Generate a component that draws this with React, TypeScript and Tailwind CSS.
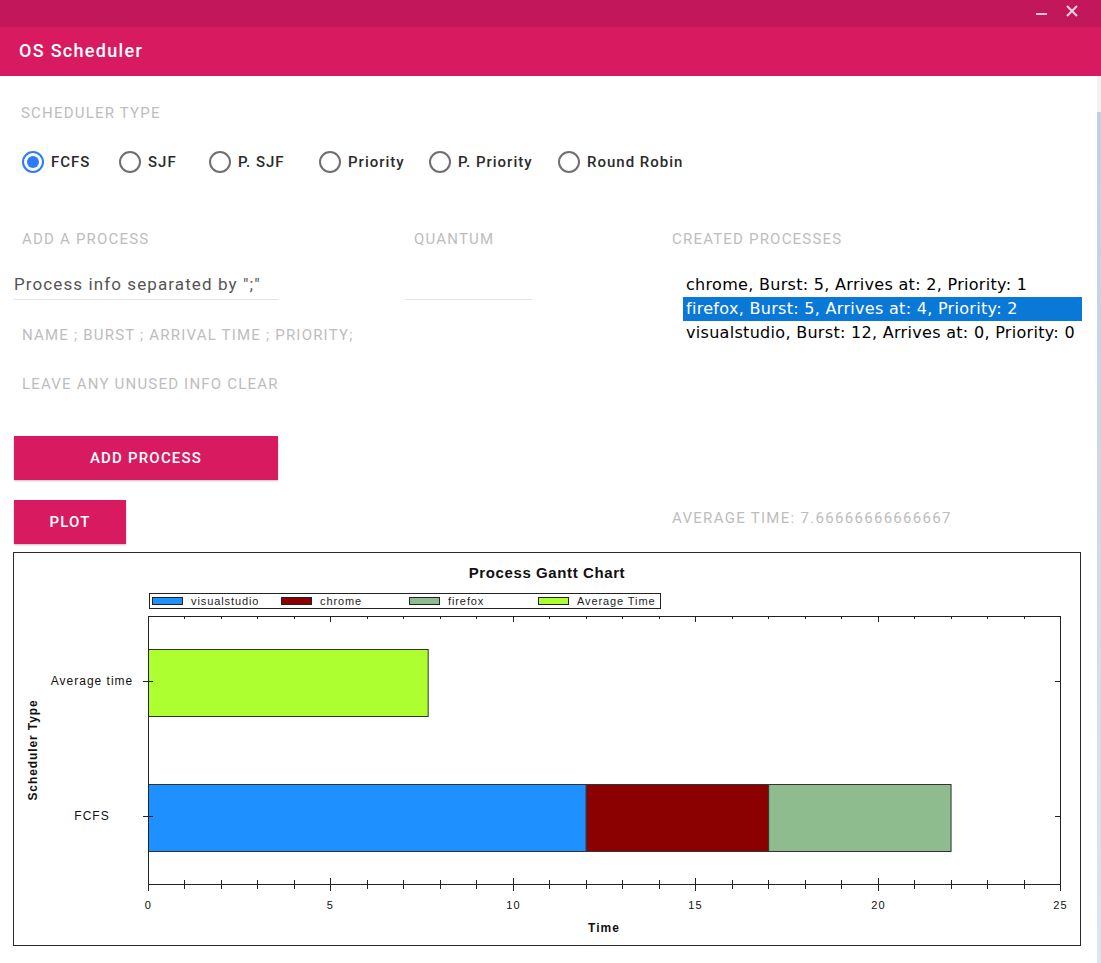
import React from "react";

const scheduleTypes = [
  { label: "FCFS", width: "w-[97px]", checked: true },
  { label: "SJF", width: "w-[90px]", checked: false },
  { label: "P. SJF", width: "w-[110px]", checked: false },
  { label: "Priority", width: "w-[110px]", checked: false },
  { label: "P. Priority", width: "w-[129px]", checked: false },
  { label: "Round Robin", width: "w-[140px]", checked: false },
];

const processes = [
  { text: "chrome, Burst: 5, Arrives at: 2, Priority: 1", selected: false },
  { text: "firefox, Burst: 5, Arrives at: 4, Priority: 2", selected: true },
  { text: "visualstudio, Burst: 12, Arrives at: 0, Priority: 0", selected: false },
];

const Radio = ({ checked }: { checked: boolean }) =>
  checked ? (
    <span className="w-[22px] h-[22px] rounded-full border-[2.5px] border-[#2f7bf5] flex items-center justify-center">
      <span className="w-[12px] h-[12px] rounded-full bg-[#2f7bf5]" />
    </span>
  ) : (
    <span className="w-[22px] h-[22px] rounded-full border-2 border-[#6f6f6f]" />
  );

// chart scale: 0..25 over x 148..1060
const X0 = 148;
const PX = 912 / 25;
const xs = (v: number) => X0 + v * PX;

const GanttChart = () => {
  const ticks = Array.from({ length: 26 }, (_, i) => i);
  return (
    <svg width="1066" height="392" viewBox="14 553 1066 392" fontFamily="'Liberation Sans', Arial, sans-serif">
      <text x="547" y="578" textAnchor="middle" fontSize="15" fontWeight="bold" fill="#111" letterSpacing="0.6">
        Process Gantt Chart
      </text>

      {/* legend */}
      <rect x="149.5" y="593.5" width="511" height="15" fill="#fff" stroke="#222" />
      {[
        { x: 152, fill: "#1e90ff", label: "visualstudio" },
        { x: 281, fill: "#8b0000", label: "chrome" },
        { x: 409, fill: "#8fbc8f", label: "firefox" },
        { x: 538, fill: "#adff2f", label: "Average Time" },
      ].map((l) => (
        <g key={l.label}>
          <rect x={l.x + 0.5} y="597.5" width="30" height="7" fill={l.fill} stroke="#222" />
          <text x={l.x + 39} y="605" fontSize="11" fill="#222" letterSpacing="0.9">
            {l.label}
          </text>
        </g>
      ))}

      {/* bars */}
      <rect x={X0 + 0.5} y="649.5" width={xs(7.6667) - X0} height="67" fill="#adff2f" stroke="#333" />
      <rect x={X0 + 0.5} y="784.5" width={xs(12) - X0} height="67" fill="#1e90ff" stroke="#333" />
      <rect x={xs(12) + 0.5} y="784.5" width={xs(17) - xs(12)} height="67" fill="#8b0000" stroke="#333" />
      <rect x={xs(17) + 0.5} y="784.5" width={xs(22) - xs(17)} height="67" fill="#8fbc8f" stroke="#333" />

      {/* axes frame */}
      <line x1="148.5" y1="616.5" x2="1060.5" y2="616.5" stroke="#222" />
      <line x1="1060.5" y1="616.5" x2="1060.5" y2="884.5" stroke="#222" />
      <line x1="148.5" y1="616.5" x2="148.5" y2="884.5" stroke="#222" />
      <line x1="148.5" y1="884.5" x2="1060.5" y2="884.5" stroke="#222" />

      {ticks.map((t) => {
        const x = Math.round(xs(t)) + 0.5;
        const major = t % 5 === 0;
        return (
          <g key={t}>
            <line x1={x} y1={major ? 878 : 880} x2={x} y2={major ? 891 : 889} stroke="#222" />
            <line x1={x} y1="616" x2={x} y2={major ? 622 : 619} stroke="#222" />
            {major && (
              <text x={x} y="909" textAnchor="middle" fontSize="11" fill="#111">
                {t}
              </text>
            )}
          </g>
        );
      })}

      {[681, 816].map((y) => (
        <g key={y}>
          <line x1="143" y1={y + 0.5} x2="153" y2={y + 0.5} stroke="#222" />
          <line x1="1055" y1={y + 0.5} x2="1060" y2={y + 0.5} stroke="#222" />
        </g>
      ))}
      <text x="92" y="685" textAnchor="middle" fontSize="12" fill="#111" letterSpacing="1">
        Average time
      </text>
      <text x="92" y="820" textAnchor="middle" fontSize="12" fill="#111" letterSpacing="1">
        FCFS
      </text>

      <text x="604" y="932" textAnchor="middle" fontSize="12" fontWeight="bold" fill="#111" letterSpacing="1">
        Time
      </text>
      <text
        x="0"
        y="0"
        transform="translate(37 750) rotate(-90)"
        textAnchor="middle"
        fontSize="12"
        fontWeight="bold"
        fill="#111"
        letterSpacing="0.9"
      >
        Scheduler Type
      </text>
    </svg>
  );
};

export default function App() {
  return (
    <div className="w-[1101px] h-[963px] flex flex-col bg-white overflow-hidden font-['Roboto',sans-serif]">
      <div className="h-[27px] bg-[#c2185b] flex items-start justify-end pr-[22px] gap-[16px]">
        <svg width="14" height="27" viewBox="0 0 14 27">
          <rect x="1" y="13" width="11" height="2" fill="#f3c4d8" />
        </svg>
        <svg width="14" height="27" viewBox="0 0 14 27">
          <path d="M2 6 L12 16 M12 6 L2 16" stroke="#f7d0e0" strokeWidth="2" />
        </svg>
      </div>
      <div className="h-[49px] bg-[#d81b60] flex items-center px-[19px]">
        <span className="text-white text-[18px] font-medium tracking-[1.3px] -mt-[2px]">OS Scheduler</span>
      </div>

      <div className="flex-1 flex tracking-[1.2px]">
        <div className="flex-1 flex flex-col">
          <div className="pl-[21px] pt-[27px] h-[47px] text-[15px] leading-[20px] text-[#bdbdbd]">SCHEDULER TYPE</div>
          <div className="flex pl-[22px] mt-[27px] h-[24px] items-center">
            {scheduleTypes.map((s) => (
              <div key={s.label} className={`${s.width} flex items-center gap-[7px]`}>
                <Radio checked={s.checked} />
                <span className="text-[15px] font-medium text-[#2b2b2b] tracking-[1px]">{s.label}</span>
              </div>
            ))}
          </div>

          <div className="flex mt-[55px]">
            <div className="w-[405px] pl-[14px] flex flex-col">
              <div className="pl-[8px] h-[20px] text-[15px] leading-[20px] text-[#bdbdbd]">ADD A PROCESS</div>
              <div className="w-[264px] h-[29px] mt-[22px] border-b border-[#e2e2e2] text-[17px] leading-[26px] text-[#555] tracking-[1.1px] whitespace-nowrap">
                Process info separated by ";"
              </div>
              <div className="pl-[8px] mt-[25px] h-[20px] text-[15px] leading-[20px] text-[#bdbdbd] whitespace-nowrap">
                NAME ; BURST ; ARRIVAL TIME ; PRIORITY;
              </div>
              <div className="pl-[8px] mt-[29px] h-[20px] text-[15px] leading-[20px] text-[#bdbdbd]">
                LEAVE ANY UNUSED INFO CLEAR
              </div>
              <button className="w-[264px] h-[44px] mt-[42px] bg-[#d81b60] text-white text-[15px] font-medium tracking-[1.2px] shadow-[0_1px_2px_rgba(0,0,0,0.25)]">
                ADD PROCESS
              </button>
            </div>
            <div className="w-[267px] flex flex-col">
              <div className="pl-[9px] h-[20px] text-[15px] leading-[20px] text-[#bdbdbd]">QUANTUM</div>
              <div className="w-[127px] h-[29px] mt-[22px] border-b border-[#e2e2e2]" />
            </div>
            <div className="flex-1 flex flex-col">
              <div className="h-[20px] text-[15px] leading-[20px] text-[#bdbdbd]">CREATED PROCESSES</div>
              <div className="ml-[11px] mt-[24px] w-[399px] flex flex-col">
                {processes.map((p) => (
                  <div
                    key={p.text}
                    className={`h-[24px] pl-[3px] leading-[24px] text-[16px] tracking-[0.3px] font-['DejaVu_Sans',sans-serif] whitespace-nowrap ${
                      p.selected ? "bg-[#0a78d7] text-white" : "text-black"
                    }`}
                  >
                    {p.text}
                  </div>
                ))}
              </div>
            </div>
          </div>

          <div className="flex items-center pl-[14px] mt-[20px]">
            <button className="w-[112px] h-[44px] bg-[#d81b60] text-white text-[15px] font-medium tracking-[1.2px] shadow-[0_1px_2px_rgba(0,0,0,0.25)]">
              PLOT
            </button>
            <span className="ml-[546px] text-[15px] text-[#bdbdbd] -mt-[8px] tracking-[1.3px]">AVERAGE TIME: 7.66666666666667</span>
          </div>

          <div className="ml-[13px] mt-[8px] w-[1068px] h-[394px] border border-[#2a2a2a]">
            <GanttChart />
          </div>
        </div>
        <div className="w-[4px] flex flex-col">
          <div className="h-[36px] bg-[#f2f2f2]" />
          <div className="flex-1 bg-gradient-to-b from-[#c3cee4] to-[#dce5f2]" />
        </div>
      </div>
    </div>
  );
}
